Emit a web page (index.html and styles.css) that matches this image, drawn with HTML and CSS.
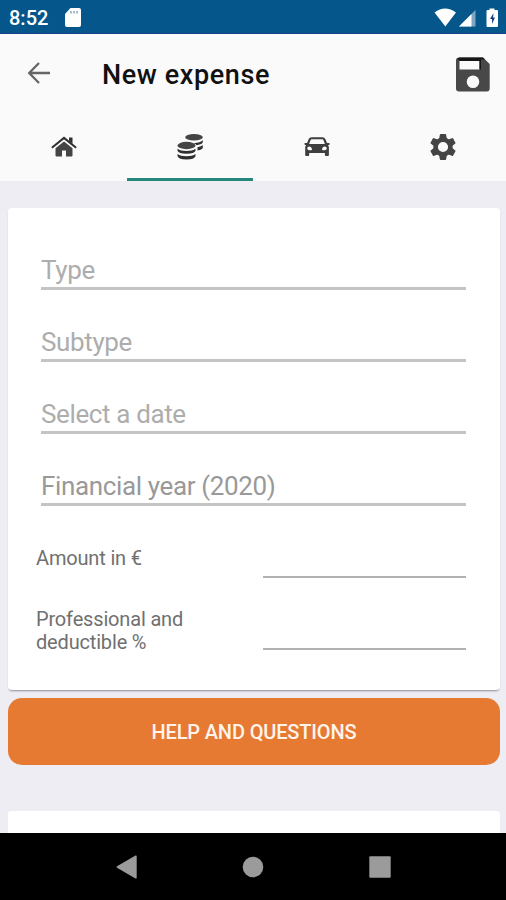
FILE: index.html
```html
<!DOCTYPE html>
<html lang="en">
<head>
<meta charset="utf-8">
<title>New expense</title>
<link rel="stylesheet" href="styles.css">
</head>
<body>
<div class="screen">
  <header class="status">
    <span class="clock">8:52</span>
    <svg class="sd" width="16" height="19" viewBox="0 0 16 19"><path fill="#fff" d="M5.500 0H14a2 2 0 0 1 2 2v15a2 2 0 0 1-2 2H2a2 2 0 0 1-2-2V6z"/><path stroke="#7f9fbe" stroke-width="1.400" d="M6 3v2.500M9 3v2.500M12 3v2.500"/></svg>
    <svg class="signals" width="66" height="20" viewBox="0 0 66 20"><path fill="#fff" d="M.5 4.500Q11-3.500 22 4.500L11.300 18.500z"/><path fill="#7fa5c5" d="M25 18.500 41.500 2v16.500z"/><path fill="#fff" d="M25 18.500 37.500 6v12.500z"/><path fill="#fff" d="M55.500 2V.5h5V2H63a1 1 0 0 1 1 1v15a1 1 0 0 1-1 1H53.500a1 1 0 0 1-1-1V3a1 1 0 0 1 1-1z"/><path fill="#173f7c" d="M59.500 5 56 11h2v5l3-6.500h-2z"/></svg>
  </header>
  <div class="toolbar">
    <svg class="back" width="24" height="24" viewBox="0 0 24 24"><path fill="none" stroke="#666" stroke-width="2.300" d="M23 12H2M12 2 2.200 12l9.800 10"/></svg>
    <h1>New expense</h1>
    <svg class="save" width="34" height="35" viewBox="0 0 34 35"><path fill="#484848" fill-rule="evenodd" d="M3 .5h24L33.700 7v24.500a3 3 0 0 1-3 3H3a3 3 0 0 1-3-3v-28a3 3 0 0 1 3-3zM3.500 4v8.500h20V4zM17 18.500a6.300 6.300 0 1 0 0 12.600 6.300 6.300 0 0 0 0-12.600z"/><path fill="#171717" d="M3 .5h24L29 2.500h-4v10h-1.500V4h-20V3H1.500z"/></svg>
  </div>
  <nav class="tabs">
    <div class="tab"><svg width="26" height="22" viewBox="0 0 26 22"><path fill="none" stroke="#303030" stroke-width="2" stroke-linecap="round" d="M1.500 11.300 13 1.900l11.500 9.400"/><path fill="#303030" d="M18 1.500h3.500v6.200L18 4.800z"/><path fill="#444" d="M13 5.500 21.500 12.300V19.500a1 1 0 0 1-1 1H15v-6h-4v6H5.500a1 1 0 0 1-1-1V12.300z"/></svg></div>
    <div class="tab active"><svg width="26" height="28" viewBox="0 0 26 28"><g fill="#444"><ellipse cx="17" cy="4.200" rx="8.800" ry="3.200"/><ellipse cx="9.500" cy="12.500" rx="9" ry="3.700"/><path fill="#303030" d="M25.800 7v2q0 2.200-6 3.200-1.300-1.300-3.500-2 7.500-.5 9.500-3.200zM25.800 12v2.500q0 2.200-5.300 3v-3.300q4-.7 5.300-2.200zM.5 15.800q3 2.200 9 2.200t9-2.200v2q-1 3-9 3t-9-3zM.5 21q3 2.200 9 2.200t9-2.200v2q-1 3.500-9 3.500T.5 23z"/></g></svg></div>
    <div class="tab"><svg width="26" height="22" viewBox="0 0 26 22"><path fill="#3e3e3e" fill-rule="evenodd" d="M8 1.200h10c2 0 3 .8 3.700 2.500L23 7h2q.9 0 .6 1l-.4.900h-1.300c.7.700 1 1.500 1 2.500V19q0 1-1 1h-2q-1 0-1-1v-2H5.200v2q0 1-1 1h-2q-1 0-1-1v-7.600c0-1 .3-1.800 1-2.500H.9L.5 8q-.3-1 .6-1h2l1.300-3.300C5.100 2 6 1.200 8 1.200zM8.200 3.300c-1 0-1.500.4-1.800 1.300L5.100 8h15.800l-1.300-3.400c-.3-.9-.8-1.300-1.800-1.300zM5.300 10.500a2 1.800 0 1 0 0 3.700c1.500 0 2.700.2 2.700-.7 0-1.200-1.200-3-2.700-3zm15.400 0c-1.500 0-2.700 1.800-2.700 3 0 .9 1.200.7 2.700.7a2 1.800 0 1 0 0-3.700z"/></svg></div>
    <div class="tab"><svg width="28" height="28" viewBox="0 0 28 28"><g fill="#444"><path id="tooth" d="M10.800 2q0-1 1-1h4.400q1 0 1 1l.8 5h-8z"/><use href="#tooth" transform="rotate(60 14 14)"/><use href="#tooth" transform="rotate(120 14 14)"/><use href="#tooth" transform="rotate(180 14 14)"/><use href="#tooth" transform="rotate(240 14 14)"/><use href="#tooth" transform="rotate(300 14 14)"/></g><circle cx="14" cy="14" r="7.400" fill="none" stroke="#444" stroke-width="4.600"/></svg></div>
  </nav>
  <main class="content">
    <section class="card form">
      <div class="field type">Type</div>
      <div class="field subtype">Subtype</div>
      <div class="field date">Select a date</div>
      <div class="field year">Financial year (2020)</div>
      <div class="row"><label class="amount">Amount in €</label><div class="entry"></div></div>
      <div class="row"><label class="percent">Professional and<br>deductible %</label><div class="entry"></div></div>
    </section>
    <button class="help"><span>HELP AND QUESTIONS</span></button>
    <section class="card next"></section>
  </main>
  <footer class="navbar">
    <div><svg width="22" height="24" viewBox="0 0 22 24"><path fill="#9b9b9b" d="M1 11.300 19.500.6q1.200-.5 1.200.7v21.400q0 1.200-1.200.7L1 12.700q-1-.7 0-1.400z"/></svg></div>
    <div><svg width="22" height="22" viewBox="0 0 22 22"><circle cx="11" cy="11" r="10.300" fill="#9b9b9b"/></svg></div>
    <div><svg width="22" height="22" viewBox="0 0 22 22"><rect x=".3" y=".3" width="21.400" height="21.400" rx="1" fill="#9b9b9b"/></svg></div>
  </footer>
</div>
</body>
</html>
```
FILE: styles.css
```css
* { box-sizing: border-box; }
body { margin: 0; font-family: Roboto, "Liberation Sans", sans-serif; }
svg { display: block; flex: none; }
.screen { width: 506px; height: 900px; display: flex; flex-direction: column; overflow: hidden; background: #eeedf4; }
.status { height: 34px; flex: none; display: flex; align-items: center; background: #04568b; border-bottom: 1px solid #1b3f8b; padding: 2px 6px 0 9px; }
.clock { width: 56px; padding-top: 1px; color: #fff; font-size: 20px; font-weight: 500; line-height: 24px; }
.signals { margin-left: auto; }
.toolbar { height: 78px; flex: none; display: flex; align-items: center; background: #fafafa; padding: 2px 16px 0 27px; }
.back { margin-bottom: 3px; }
h1 { margin: 1px 0 0 51px; font-size: 27px; font-weight: 500; letter-spacing: .6px; line-height: 32px; color: #111; white-space: nowrap; }
.save { margin-left: auto; }
.tabs { height: 69px; flex: none; display: grid; grid-template-columns: repeat(4, 1fr); background: #fafafa; }
.tab { display: flex; justify-content: center; align-items: center; padding: 3px 0 0 1px; border-bottom: 3px solid transparent; }
.active { border-color: #25877b; }
.content { height: 652px; flex: none; padding: 27px 6px 0 8px; overflow: hidden; }
.card { background: #fff; border-radius: 4px; }
.form { height: 482px; padding: 10px 34px 0 28px; box-shadow: 0 2px 2px -1px #8f8e93; }
.field { height: 72px; margin-left: 5px; padding-top: 37px; border-bottom: 3px solid #c4c4c4; color: #adadad; font-size: 26px; letter-spacing: -.37px; line-height: 30px; white-space: nowrap; }
.year { color: #999; }
.row { height: 72px; display: flex; justify-content: space-between; }
.row label { color: #707070; font-size: 20px; letter-spacing: -.17px; line-height: 23px; white-space: nowrap; }
.amount { padding-top: 41px; }
.percent { padding-top: 30px; }
.entry { width: 203px; border-bottom: 2px solid #b2b2b2; }
.help { display: block; width: 100%; height: 67px; margin-top: 8px; border: 0; padding: 1px 0 0; border-radius: 14px; background: #e67a32; color: #fff4ec; font: 500 20px/24px Roboto, sans-serif; letter-spacing: -.15px; }
.next { height: 40px; margin-top: 46px; border-radius: 3px 3px 0 0; }
.navbar { flex: 1; background: #000; display: grid; grid-template-columns: repeat(3, 126.5px); justify-content: center; align-items: center; }
.navbar div { display: flex; justify-content: center; }
```
